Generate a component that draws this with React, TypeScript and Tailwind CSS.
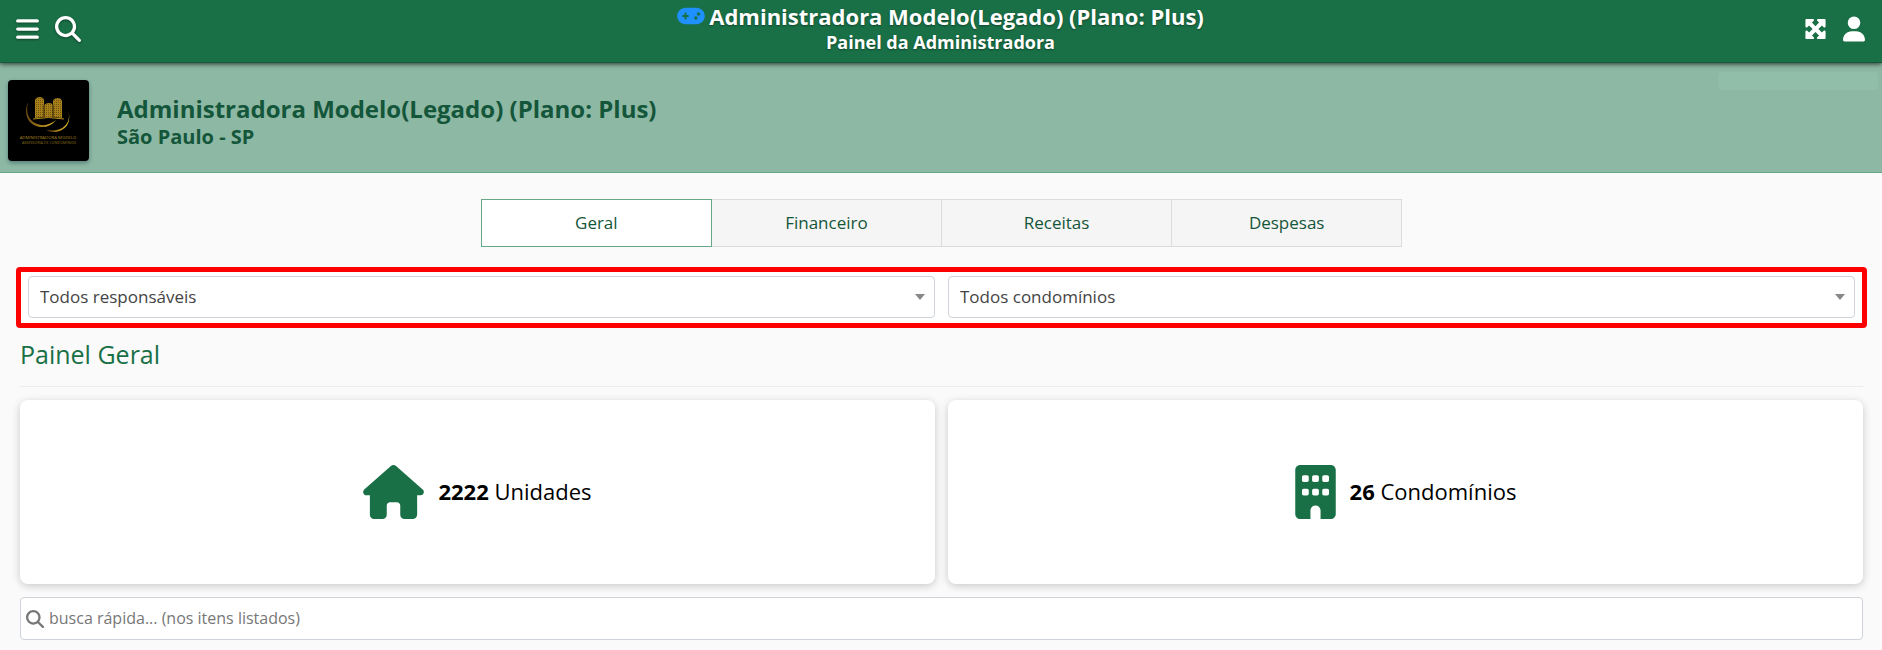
import type { ReactNode } from "react";
import {
  FaBars,
  FaBuilding,
  FaGamepad,
  FaHouse,
  FaMagnifyingGlass,
  FaMaximize,
  FaUser,
} from "react-icons/fa6";

const tabs = ["Geral", "Financeiro", "Receitas", "Despesas"];

function IconButton({ label, children }: { label: string; children: ReactNode }) {
  return (
    <button type="button" aria-label={label} className="flex text-white">
      {children}
    </button>
  );
}

function FilterSelect({ label }: { label: string }) {
  return (
    <div className="relative flex-1">
      <select
        aria-label={label}
        className="block h-[42px] w-full appearance-none rounded border border-[#ced4da] bg-white pr-8 pl-[11px] text-[17px] text-[#444]"
      >
        <option>{label}</option>
      </select>
      <svg
        viewBox="0 0 10 6"
        className="pointer-events-none absolute top-[18px] right-[10px] h-[6px] w-[10px] fill-[#888]"
      >
        <path d="M0 0H10L5 6Z" />
      </svg>
    </div>
  );
}

function StatCard({ icon, value, label }: { icon: ReactNode; value: string; label: string }) {
  return (
    <section className="flex h-[184px] flex-1 items-center justify-center gap-[14px] rounded-lg bg-white text-[22px] leading-8 text-black shadow-[0_2px_8px_rgba(0,0,0,0.2)]">
      {icon}
      <p className="pb-[2px]">
        <strong className="font-bold">{value}</strong> {label}
      </p>
    </section>
  );
}

function BrandLogo() {
  return (
    <svg
      viewBox="0 0 81 81"
      role="img"
      aria-label="Administradora Modelo"
      className="size-[81px] shrink-0 rounded bg-black shadow-[0_2px_4px_rgba(0,40,60,0.4)]"
    >
      <defs>
        <linearGradient id="gold" x1="0" x2="1">
          <stop offset="0" stopColor="#6b4a10" />
          <stop offset="0.6" stopColor="#b48a1c" />
          <stop offset="1" stopColor="#f0d030" />
        </linearGradient>
        <pattern id="windows" width="2" height="2" patternUnits="userSpaceOnUse">
          <rect width="2" height="2" fill="#a8801a" />
          <rect width="1" height="1" fill="#6f5310" />
        </pattern>
      </defs>
      <path
        d="M27 38V20Q28 17 32 17Q35 17 36 20V25Q38 23 41 23Q44 23 45 25V21Q46 18 50 18Q53 18 54 21V38Q41 36 27 38Z"
        fill="url(#windows)"
      />
      <path d="M36 25V37M45 25V37" stroke="#2a1e04" />
      <path d="M25 39Q40 36 56 39" fill="none" stroke="#b48a1c" />
      <path
        d="M20 22C15 34 20 45 32 47Q42 48 48 40Q41 46 33 45C22 43 17 35 20 22Z"
        fill="url(#gold)"
      />
      <path
        d="M60 30C64 42 56 53 38 50Q42 52 47 52C58 51 64 42 60 30Z"
        fill="url(#gold)"
      />
      <text x="40" y="59" textAnchor="middle" fontSize="4.3" fill="#a8841c">
        ADMINISTRADORA MODELO
      </text>
      <text x="41" y="64" textAnchor="middle" fontSize="3.7" fill="#8a6c16">
        ASSESSORIA DE CONDOMÍNIOS
      </text>
    </svg>
  );
}

export default function App() {
  return (
    <div className="min-h-screen bg-[#fafafa] font-['Open_Sans',sans-serif]">
      <header className="relative flex h-[63px] items-start justify-between border-b border-[#14593a] bg-[#197046] px-4 shadow-[0_1px_5px_rgba(0,0,0,0.7)]">
        <nav className="flex flex-1 gap-4 pt-4">
          <IconButton label="Menu">
            <FaBars className="h-[26px] w-[23px] drop-shadow-[0_1px_1px_rgba(0,0,0,0.4)]" />
          </IconButton>
          <IconButton label="Buscar">
            <FaMagnifyingGlass className="size-[26px] drop-shadow-[0_1px_1px_rgba(0,0,0,0.4)]" />
          </IconButton>
        </nav>
        <div className="flex flex-col items-center pt-[2px] font-bold text-white [text-shadow:0_1px_2px_rgba(0,0,0,0.4)]">
          <div className="flex items-center gap-1 text-[22px] leading-7">
            <FaGamepad className="h-[22px] w-[28px] text-[#1e90ff]" />
            Administradora Modelo(Legado) (Plano: Plus)
          </div>
          <div className="text-lg leading-6">Painel da Administradora</div>
        </div>
        <nav className="flex flex-1 justify-end gap-4 pt-4 pr-px">
          <IconButton label="Tela cheia">
            <FaMaximize className="h-[26px] w-[23px]" />
          </IconButton>
          <IconButton label="Usuário">
            <FaUser className="h-[26px] w-[22px]" />
          </IconButton>
        </nav>
      </header>

      <div className="flex h-[110px] items-start gap-7 border-b border-[#68a68a] bg-[#8db8a4] pt-[17px] pl-2 text-[#14563a]">
        <BrandLogo />
        <div className="flex-1 pt-[13px] font-bold">
          <h1 className="text-[24px] leading-8">Administradora Modelo(Legado) (Plano: Plus)</h1>
          <p className="text-[20px] leading-6">São Paulo - SP</p>
        </div>
        <div className="-mt-2 mr-1 h-[18px] w-[160px] rounded-sm bg-[#90bea8]" />
      </div>

      <main className="pt-[26px] pr-[19px] pb-[10px] pl-5">
        <div role="tablist" className="mx-auto flex w-1/2">
          {tabs.map((tab, i) => (
            <button
              key={tab}
              type="button"
              role="tab"
              aria-selected={i === 0}
              className={
                i === 0
                  ? "h-12 flex-1 border border-[#68a68a] bg-white text-[17px] text-[#14563a]"
                  : "h-12 flex-1 border-y border-r border-[#dcdcdc] bg-[#f5f5f5] text-[17px] text-[#14563a]"
              }
            >
              {tab}
            </button>
          ))}
        </div>

        <div className="-mx-1 mt-5 flex gap-[13px] rounded-sm border-[5px] border-[#ff0000] bg-white px-[7px] pt-1 pb-[5px]">
          <FilterSelect label="Todos responsáveis" />
          <FilterSelect label="Todos condomínios" />
        </div>

        <h2 className="mt-[9px] border-b border-[#ececec] pb-[15px] text-[25px] leading-[34px] text-[#197046]">
          Painel Geral
        </h2>

        <div className="mt-[13px] flex gap-[13px]">
          <StatCard
            icon={<FaHouse className="h-[54px] w-[61px] text-[#197046]" />}
            value="2222"
            label="Unidades"
          />
          <StatCard
            icon={<FaBuilding className="h-[54px] w-[41px] text-[#197046]" />}
            value="26"
            label="Condomínios"
          />
        </div>

        <label className="mt-[13px] flex h-[43px] items-center gap-[5px] rounded border border-[#ced4da] bg-white px-[5px]">
          <FaMagnifyingGlass className="size-[18px] shrink-0 text-[#777]" />
          <input
            type="search"
            aria-label="Busca rápida"
            placeholder="busca rápida... (nos itens listados)"
            className="min-w-0 flex-1 bg-transparent pb-[2px] text-base text-[#444] outline-none placeholder:text-[#777]"
          />
        </label>
      </main>
    </div>
  );
}
